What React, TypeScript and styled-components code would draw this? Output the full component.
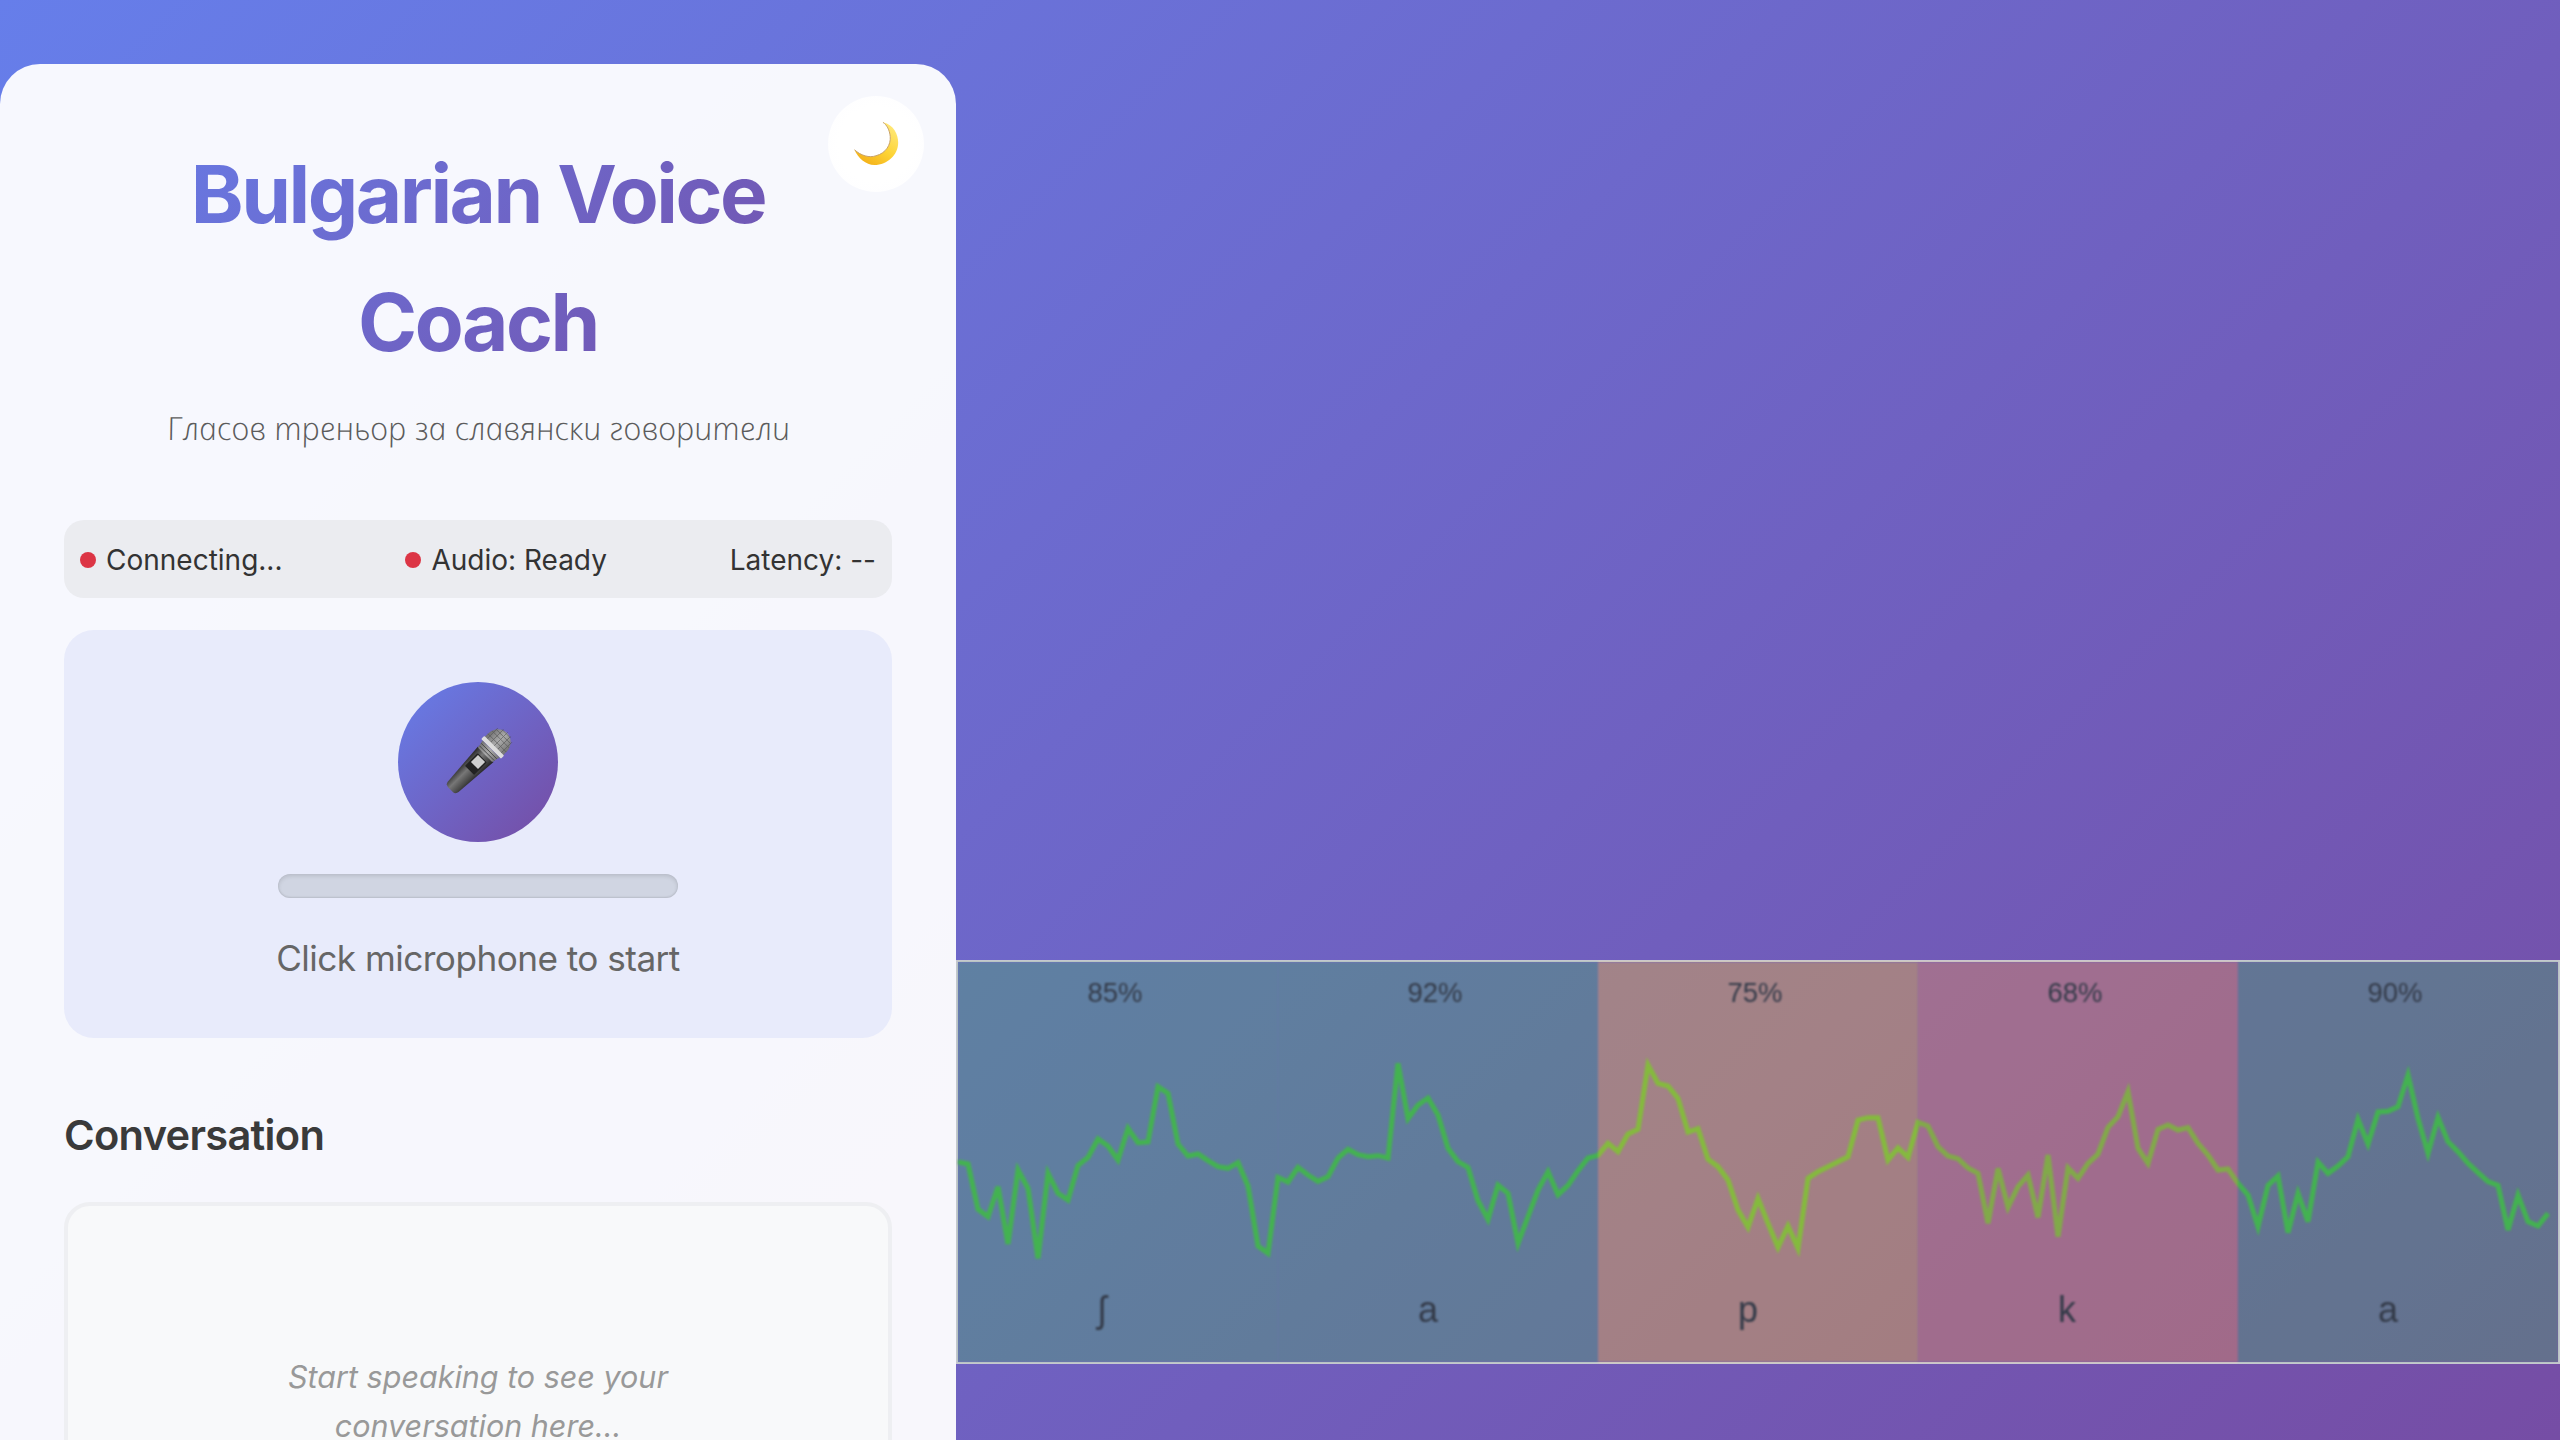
import React from "react";
import styled, { createGlobalStyle } from "styled-components";

const GlobalStyle = createGlobalStyle`
  * {
    box-sizing: border-box;
  }

  body {
    margin: 0;
    font-family: Inter, "Noto Sans", sans-serif;
    line-height: 1.6;
    color: #333;
  }
`;

const Page = styled.div`
  display: flex;
  align-items: flex-start;
  height: 100vh;
  overflow: hidden;
  background: linear-gradient(135deg, #667eea 0%, #764ba2 100%) no-repeat;
  background-size: 100% 1600px;
`;

const Panel = styled.section`
  position: relative;
  flex: 0 0 956px;
  margin-top: 64px;
  padding: 66px 64px 64px;
  border-radius: 40px 40px 0 0;
  background: rgba(255, 255, 255, 0.95);
`;

const ThemeToggle = styled.button`
  position: absolute;
  top: 32px;
  right: 32px;
  display: flex;
  align-items: center;
  justify-content: center;
  width: 96px;
  height: 96px;
  padding: 0;
  border: 0;
  border-radius: 50%;
  background: radial-gradient(circle, #fff 55%, #fdfdff 100%);
`;

const Title = styled.h1`
  margin: 0;
  font-size: 80px;
  font-weight: 700;
  line-height: 128px;
  letter-spacing: -2.5px;
  text-align: center;
  background: linear-gradient(135deg, #667eea, #764ba2);
  -webkit-background-clip: text;
  background-clip: text;
  color: transparent;
`;

const Subtitle = styled.p`
  margin: 14px 0 64px;
  font-family: "Open Sans", sans-serif;
  font-size: 32px;
  font-style: italic;
  font-weight: 300;
  line-height: 56px;
  text-align: center;
  color: #5c5c5c;
  transform: skewX(11deg);
`;

const StatusBar = styled.div`
  display: flex;
  align-items: center;
  justify-content: space-between;
  height: 78px;
  padding: 2px 16px 0;
  border-radius: 20px;
  background: #ebecf0;
  font-size: 28px;
`;

const StatusItem = styled.span`
  display: flex;
  align-items: center;
  gap: 10px;
`;

const Dot = styled.i`
  width: 16px;
  height: 16px;
  border-radius: 50%;
  background: #dc3545;
`;

const RecordCard = styled.div`
  display: flex;
  flex-direction: column;
  align-items: center;
  margin-top: 32px;
  padding: 52px 32px;
  border-radius: 30px;
  background: #e8ebfb;
`;

const MicButton = styled.button`
  display: flex;
  align-items: center;
  justify-content: center;
  width: 160px;
  height: 160px;
  padding: 0;
  border: 0;
  border-radius: 50%;
  background: linear-gradient(135deg, #667eea, #764ba2);
`;

const LevelBar = styled.div`
  width: 400px;
  height: 24px;
  margin-top: 32px;
  border-radius: 12px;
  background: #d0d5e2;
  box-shadow: inset 0 2px 4px rgba(0, 0, 0, 0.12), inset 0 -1px 2px rgba(0, 0, 0, 0.1);
`;

const RecordHint = styled.p`
  margin: 32px 0 0;
  font-size: 35.2px;
  line-height: 56px;
  letter-spacing: -0.55px;
  color: #666;
`;

const SectionTitle = styled.h2`
  margin: 64px 0 34px;
  font-size: 41.6px;
  font-weight: 600;
  line-height: 66px;
  letter-spacing: -0.7px;
  color: #3a3a3a;
`;

const Conversation = styled.div`
  display: flex;
  align-items: center;
  justify-content: center;
  height: 398px;
  border: 4px solid #eeeff2;
  border-radius: 26px;
  background: #f8f9fa;
`;

const EmptyNote = styled.p`
  width: 440px;
  margin: 0;
  font-size: 30.5px;
  font-style: italic;
  line-height: 49px;
  text-align: center;
  color: #999;
`;

const Stage = styled.main`
  flex: 1;
  display: flex;
  flex-direction: column;
  justify-content: flex-end;
  height: 100%;
  padding-bottom: 76px;
`;

const Wave = styled.div`
  position: relative;
  display: grid;
  grid-template-columns: repeat(5, 320px);
  height: 404px;
  border: 2px solid #c9c9d2;
  background: rgba(255, 255, 255, 0.07);
`;

const WaveLine = styled.svg`
  position: absolute;
  top: 0;
  left: 0;
  width: 1600px;
  height: 400px;
  filter: blur(0.8px);
`;

const tints = {
  good: "rgba(40, 167, 69, 0.3)",
  fair: "rgba(255, 193, 7, 0.3)",
  poor: "rgba(245, 135, 45, 0.3)",
};

type Grade = keyof typeof tints;

const Segment = styled.div<{ $grade: Grade }>`
  position: relative;
  display: flex;
  flex-direction: column;
  align-items: center;
  justify-content: space-between;
  padding: 13px 0 32px;
  background: ${(p) => tints[p.$grade]};
  font-family: "Liberation Sans", Arial, sans-serif;
  color: #333a48;
  filter: blur(0.8px);
`;

const Score = styled.span`
  margin-right: 6px;
  font-size: 27.5px;
  line-height: 36px;
`;

const Phoneme = styled.span`
  width: 40px;
  font-size: 36px;
  line-height: 40px;
`;

// y values read off the reference (3x crop, 1040 = crop top), one sample per 10px
const samples = [
  366, 372, 508, 530, 440, 612, 390, 445, 655, 400, 460, 480, 376, 352, 297, 318,
  360, 265, 308, 306, 140, 160, 312, 348, 342, 362, 380, 385, 368, 438, 618, 640,
  412, 426, 382, 405, 424, 410, 354, 328, 344, 350, 347, 354, 70, 236, 195, 174,
  225, 325, 365, 382, 482, 538, 435, 460, 610, 530, 450, 395, 464, 436, 392, 354,
  346, 310, 335, 282, 268, 75, 130, 138, 175, 276, 266, 358, 380, 420, 510, 562,
  475, 550, 622, 558, 625, 415, 395, 380, 365, 350, 240, 233, 233, 360, 324, 352,
  247, 258, 320, 348, 356, 384, 400, 550, 385, 502, 440, 405, 532, 345, 590, 384,
  415, 370, 342, 262, 230, 155, 325, 370, 268, 255, 270, 263, 310, 345, 390, 387,
  430, 465, 560, 436, 408, 578, 460, 545, 366, 400, 378, 350, 238, 312, 216, 214,
  200, 105, 235, 340, 232, 305, 335, 370, 398, 425, 436, 570, 465, 545, 558, 520,
];

const points = samples.map((v, i) => `${i * 10},${78 + v / 3}`).join(" ");

const segments: { score: string; phoneme: string; grade: Grade }[] = [
  { score: "85%", phoneme: "ʃ", grade: "good" },
  { score: "92%", phoneme: "a", grade: "good" },
  { score: "75%", phoneme: "p", grade: "fair" },
  { score: "68%", phoneme: "k", grade: "poor" },
  { score: "90%", phoneme: "a", grade: "good" },
];

function MoonIcon() {
  return (
    <svg width="50" height="48" viewBox="120 90 150 145">
      <defs>
        <linearGradient id="moon" x1="0.9" y1="0.1" x2="0.3" y2="1">
          <stop offset="0" stopColor="#ffe878" />
          <stop offset="0.55" stopColor="#fdd335" />
          <stop offset="1" stopColor="#f4b21a" />
        </linearGradient>
      </defs>
      <path
        d="M216 97C250 105 262 135 262 158C262 195 230 226 190 226C165 226 140 205 130 180C150 198 175 205 195 198C225 190 240 165 238 140C236 120 228 105 216 97Z"
        fill="url(#moon)"
      />
      <path
        d="M130 180C150 198 175 205 195 198C225 190 240 165 238 140C236 120 228 105 216 97"
        fill="none"
        stroke="#c9a26a"
        strokeWidth="3"
      />
    </svg>
  );
}

function MicIcon() {
  return (
    <svg width="64" height="64" viewBox="0 0 64 64" overflow="visible">
      <defs>
        <linearGradient id="micBody" x1="0" y1="0" x2="1" y2="0">
          <stop offset="0" stopColor="#262626" />
          <stop offset="0.4" stopColor="#777" />
          <stop offset="0.75" stopColor="#4a4a4a" />
          <stop offset="1" stopColor="#222" />
        </linearGradient>
        <linearGradient id="micHead" x1="0" y1="0" x2="1" y2="0">
          <stop offset="0" stopColor="#6f6f6f" />
          <stop offset="0.5" stopColor="#ababab" />
          <stop offset="1" stopColor="#747474" />
        </linearGradient>
      </defs>
      <g transform="rotate(45 32 32) translate(0 -1)">
        <path d="M21 22H43L39.5 68Q39 72 35 72H29Q25 72 24.5 68Z" fill="url(#micBody)" />
        <path d="M19 11V7C19 -13 45 -13 45 7V11Z" fill="url(#micHead)" />
        <path
          d="M19 6H45M20 1H44M22 -3H42M26 -7H38M32 -9V11M27 -8V11M37 -8V11M22 -5V11M42 -5V11"
          stroke="#4f4f4f"
          strokeWidth="0.8"
          opacity="0.7"
        />
        <rect x="18" y="10" width="28" height="4.5" rx="1" fill="#dcdcdc" />
        <path d="M20 14.5H44L42 23H22Z" fill="url(#micHead)" />
        <path d="M21 17.5H43M21.5 20.5H42.5" stroke="#454545" strokeWidth="0.9" />
        <rect x="25.5" y="27" width="13" height="18" rx="1" fill="#222" />
        <rect x="27" y="28" width="10" height="10" fill="#cfcfcf" />
      </g>
    </svg>
  );
}

export default function App() {
  return (
    <Page>
      <GlobalStyle />
      <Panel>
        <ThemeToggle aria-label="Toggle theme">
          <MoonIcon />
        </ThemeToggle>
        <Title>Bulgarian Voice Coach</Title>
        <Subtitle>Гласов треньор за славянски говорители</Subtitle>
        <StatusBar>
          <StatusItem>
            <Dot />
            Connecting...
          </StatusItem>
          <StatusItem>
            <Dot />
            Audio: Ready
          </StatusItem>
          <StatusItem>Latency: --</StatusItem>
        </StatusBar>
        <RecordCard>
          <MicButton aria-label="Start recording">
            <MicIcon />
          </MicButton>
          <LevelBar />
          <RecordHint>Click microphone to start</RecordHint>
        </RecordCard>
        <SectionTitle>Conversation</SectionTitle>
        <Conversation>
          <EmptyNote>Start speaking to see your conversation here...</EmptyNote>
        </Conversation>
      </Panel>
      <Stage>
        <Wave>
          <WaveLine viewBox="0 0 1600 400">
            <polyline points={points} fill="none" stroke="#50b856" strokeWidth="5" />
          </WaveLine>
          {segments.map((s, i) => (
            <Segment key={i} $grade={s.grade}>
              <Score>{s.score}</Score>
              <Phoneme>{s.phoneme}</Phoneme>
            </Segment>
          ))}
        </Wave>
      </Stage>
    </Page>
  );
}
